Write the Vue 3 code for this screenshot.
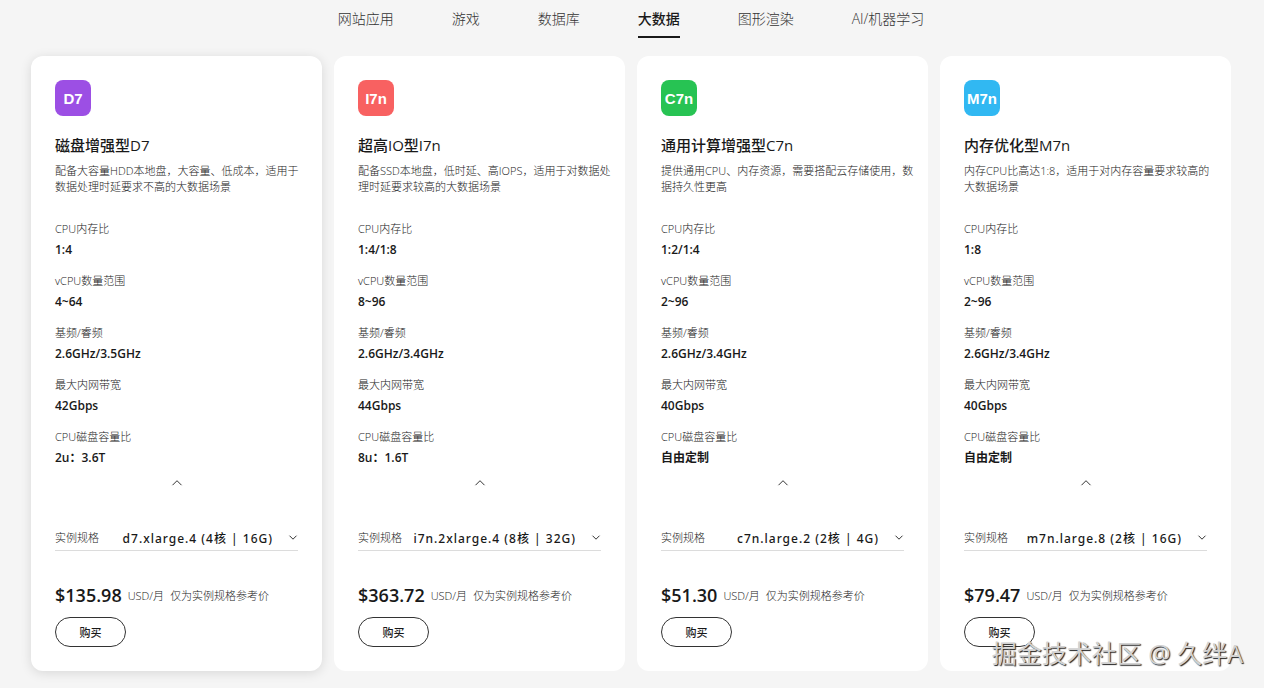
<script setup>
import { ref } from 'vue'

const tabs = ['网站应用', '游戏', '数据库', '大数据', '图形渲染', 'AI/机器学习']
const activeTab = ref('大数据')

const labels = ['CPU内存比', 'vCPU数量范围', '基频/睿频', '最大内网带宽', 'CPU磁盘容量比']

const cards = [
  {
    id: 'd7', badge: 'D7', name: '磁盘增强型D7',
    desc: ['配备大容量HDD本地盘，大容量、低成本，适用于', '数据处理时延要求不高的大数据场景'],
    values: ['1:4', '4~64', '2.6GHz/3.5GHz', '42Gbps', '2u：3.6T'],
    flavor: 'd7.xlarge.4 (4核 | 16G)', price: '$135.98',
  },
  {
    id: 'i7n', badge: 'I7n', name: '超高IO型I7n',
    desc: ['配备SSD本地盘，低时延、高IOPS，适用于对数据处', '理时延要求较高的大数据场景'],
    values: ['1:4/1:8', '8~96', '2.6GHz/3.4GHz', '44Gbps', '8u：1.6T'],
    flavor: 'i7n.2xlarge.4 (8核 | 32G)', price: '$363.72',
  },
  {
    id: 'c7n', badge: 'C7n', name: '通用计算增强型C7n',
    desc: ['提供通用CPU、内存资源，需要搭配云存储使用，数', '据持久性更高'],
    values: ['1:2/1:4', '2~96', '2.6GHz/3.4GHz', '40Gbps', '自由定制'],
    flavor: 'c7n.large.2 (2核 | 4G)', price: '$51.30',
  },
  {
    id: 'm7n', badge: 'M7n', name: '内存优化型M7n',
    desc: ['内存CPU比高达1:8，适用于对内存容量要求较高的', '大数据场景'],
    values: ['1:8', '2~96', '2.6GHz/3.4GHz', '40Gbps', '自由定制'],
    flavor: 'm7n.large.8 (2核 | 16G)', price: '$79.47',
  },
]
</script>

<template>
  <main class="page">
    <nav class="tabs">
      <button
        v-for="tab in tabs"
        :key="tab"
        type="button"
        class="tab"
        :class="{ active: tab === activeTab }"
        @click="activeTab = tab"
      >{{ tab }}</button>
    </nav>

    <section class="cards">
      <article v-for="(card, i) in cards" :key="card.id" class="card" :class="{ raised: i === 0 }">
        <div class="badge" :class="card.id">{{ card.badge }}</div>
        <h2 class="name">{{ card.name }}</h2>
        <p class="desc">
          <span v-for="line in card.desc" :key="line">{{ line }}</span>
        </p>
        <dl class="specs">
          <div v-for="(label, n) in labels" :key="label" class="spec">
            <dt>{{ label }}</dt>
            <dd>{{ card.values[n] }}</dd>
          </div>
        </dl>
        <button type="button" class="collapse" aria-label="收起">
          <svg width="12" height="8" viewBox="0 0 12 8"><path d="M1.5 6.2 6 1.7l4.5 4.5" /></svg>
        </button>
        <div class="flavor">
          <label :for="'flavor-' + card.id">实例规格</label>
          <select :id="'flavor-' + card.id">
            <option>{{ card.flavor }}</option>
          </select>
          <svg width="10" height="8" viewBox="0 0 10 8"><path d="M1.5 1.7 5 5.2l3.5-3.5" /></svg>
        </div>
        <p class="cost">
          <strong>{{ card.price }}</strong>
          <span>USD/月</span>
          <span>仅为实例规格参考价</span>
        </p>
        <button type="button" class="buy">购买</button>
      </article>
    </section>

    <div class="watermark">掘金技术社区 @ 久绊A</div>
  </main>
</template>

<style>
body {
  background: #f5f5f5;
}
</style>

<style scoped>
.page {
  position: relative;
  padding: 0 33px 17px 31px;
  font-family: "Open Sans", "Noto Sans CJK SC", sans-serif;
  color: #191919;
}
button,
select {
  font-family: inherit;
  color: inherit;
  background: none;
  border: 0;
  margin: 0;
  padding: 0;
}
.tabs {
  display: flex;
  justify-content: center;
  gap: 58px;
}
.tab {
  height: 38px;
  padding-top: 2px;
  border-bottom: 2px solid transparent;
  font-size: 14px;
  line-height: 34px;
  font-weight: 300;
  color: #333;
  white-space: nowrap;
}
.tab.active {
  border-color: #191919;
  font-weight: 500;
  color: #191919;
}
.cards {
  display: grid;
  grid-template-columns: repeat(4, minmax(0, 1fr));
  gap: 12px;
  margin-top: 18px;
}
.card {
  display: flex;
  flex-direction: column;
  align-items: flex-start;
  padding: 24px;
  border-radius: 12px;
  background: #fff;
}
.raised {
  box-shadow: 0 2px 12px rgba(0, 0, 0, 0.12);
}
.badge {
  box-sizing: border-box;
  width: 36px;
  height: 36px;
  padding-top: 2px;
  border-radius: 8px;
  font: bold 15px/34px "Liberation Sans", Arial, sans-serif;
  text-align: center;
  color: #fff;
}
.d7 { background: #9c4fe4; }
.i7n { background: #f86161; }
.c7n { background: #27c353; }
.m7n { background: #31b8f2; }
.name {
  margin: 17px 0 0;
  font-size: 15px;
  line-height: 24px;
  font-weight: 500;
}
.desc {
  display: flex;
  flex-direction: column;
  margin: 6px 0 0;
  font-size: 11px;
  line-height: 16px;
  font-weight: 300;
  color: #222;
  white-space: nowrap;
}
.specs {
  display: grid;
  gap: 14px;
  margin: 26px 0 0;
}
.spec {
  display: grid;
  gap: 4px;
}
dt {
  font-size: 11px;
  line-height: 16px;
  font-weight: 300;
  color: #222;
}
dd {
  margin: 0;
  font-size: 12px;
  line-height: 18px;
  font-weight: 600;
}
svg {
  display: block;
  fill: none;
  stroke: #333;
  stroke-width: 1;
}
.collapse {
  display: grid;
  place-items: center;
  align-self: center;
  width: 16px;
  height: 16px;
  margin-top: 8px;
}
.flavor {
  display: flex;
  align-items: center;
  align-self: stretch;
  height: 24px;
  margin-top: 35px;
  border-bottom: 1px solid #dcdcdc;
}
.flavor label {
  font-size: 11px;
  line-height: 16px;
  font-weight: 300;
  color: #222;
  white-space: nowrap;
}
.flavor select {
  flex: 1;
  min-width: 0;
  height: 24px;
  appearance: none;
  font-family: "Noto Sans", "Noto Sans CJK SC", sans-serif;
  font-size: 12px;
  font-weight: 500;
  letter-spacing: 1px;
  text-align: right;
  text-align-last: right;
  margin-right: 15px;
}
.cost {
  display: flex;
  align-items: center;
  gap: 6px;
  margin: 32px 0 0;
  font-size: 11px;
  line-height: 24px;
  font-weight: 300;
  color: #222;
  white-space: nowrap;
}
.cost strong {
  font-size: 18px;
  font-weight: 600;
  color: #191919;
}
.cost span {
  padding-top: 2px;
  line-height: 22px;
}
.buy {
  height: 30px;
  min-width: 71px;
  margin-top: 10px;
  border: 1px solid #333;
  border-radius: 15px;
  font-size: 11px;
  font-weight: 500;
}
.watermark {
  position: absolute;
  right: 21px;
  bottom: 16px;
  font-size: 25px;
  line-height: 38px;
  font-weight: 400;
  color: #d2d2d2;
  text-shadow: 1px 1px 1px #222;
  white-space: nowrap;
}
</style>
